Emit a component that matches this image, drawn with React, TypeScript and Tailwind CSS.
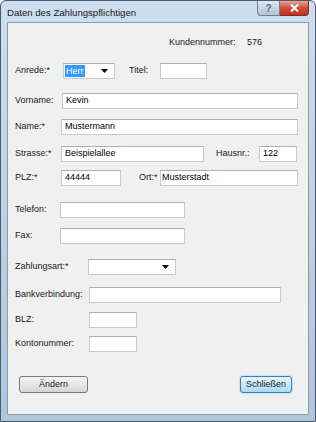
import React from "react";

const font = { fontFamily: '"Liberation Sans", Arial, sans-serif' };

const Box = ({ w, value, className = "" }: { w: string; value?: string; className?: string }) => (
  <div
    className={`h-[16px] ${w} bg-white border border-[#c5cbd2] border-t-[#a9b0b8] flex items-center pl-[3px] text-[9px] text-black ${className}`}
  >
    {value}
  </div>
);

const Label = ({ text, w }: { text: string; w: string }) => (
  <div className={`${w} shrink-0 text-[9px] text-[#202020]`}>{text}</div>
);

const Arrow = () => (
  <svg width="7" height="4" viewBox="0 0 7 4" className="shrink-0">
    <path d="M0 0h7L3.5 4z" fill="#000" />
  </svg>
);

export default function App() {
  return (
    <div style={font} className="w-[316px] h-[422px] overflow-hidden">
      {/* Fensterrahmen */}
      <div className="w-full h-full flex flex-col rounded-t-[6px] border border-[#4a5a6a] bg-gradient-to-b from-[#cddfee] via-[#bdd3e5] to-[#adc6db]">
        {/* Titelleiste */}
        <div className="h-[21px] flex items-start shrink-0">
          <div className="pl-[6px] pt-[5px] text-[9.6px] text-[#1a1a1a]">Daten des Zahlungspflichtigen</div>
          <div className="ml-auto mr-[6px] flex">
            <div className="w-[23px] h-[15px] rounded-bl-[4px] border border-[#6f7f90] border-t-0 bg-gradient-to-b from-[#dfe8f1] to-[#b3c3d3] flex items-center justify-center text-[10px] font-bold text-[#5a6a7a]">
              ?
            </div>
            <div className="w-[29px] h-[15px] rounded-br-[4px] border border-[#7a2a2a] border-t-0 border-l-0 bg-gradient-to-b from-[#e8a493] via-[#cf4b3a] to-[#c1301e] flex items-center justify-center">
              <svg width="9" height="8" viewBox="0 0 9 8">
                <path d="M1 0.5l7 7M8 0.5l-7 7" stroke="#fff" strokeWidth="2" />
              </svg>
            </div>
          </div>
        </div>

        {/* Client-Bereich */}
        <div className="flex-1 mx-[6px] mb-[6px] border border-[#8a9bad] bg-[#f0f0f0] flex flex-col px-[7px]">
          <div className="mt-[12px] h-[16px] flex items-center text-[9px] text-[#202020]">
            <div className="ml-[154px] w-[78px]">Kundennummer:</div>
            <div>576</div>
          </div>

          <div className="mt-[12px] h-[16px] flex items-center">
            <Label text="Anrede:*" w="w-[48px]" />
            <div className="w-[52px] h-[16px] bg-white border border-[#c5cbd2] border-t-[#a9b0b8] flex items-center pl-[1px] pr-[6px]">
              <span className="bg-[#3399ff] text-white text-[9px] px-[1px] leading-[12px]">Herr</span>
              <div className="ml-auto">
                <Arrow />
              </div>
            </div>
            <div className="ml-[14px] w-[31px] text-[9px] text-[#202020]">Titel:</div>
            <Box w="w-[47px]" />
          </div>

          <div className="mt-[14px] h-[16px] flex items-center">
            <Label text="Vorname:" w="w-[47px]" />
            <Box w="w-[236px]" value="Kevin" />
          </div>

          <div className="mt-[10px] h-[16px] flex items-center">
            <Label text="Name:*" w="w-[46px]" />
            <Box w="w-[237px]" value="Mustermann" />
          </div>

          <div className="mt-[11px] h-[16px] flex items-center">
            <Label text="Strasse:*" w="w-[46px]" />
            <Box w="w-[143px]" value="Beispielallee" />
            <div className="ml-[12px] w-[43px] text-[9px] text-[#202020]">Hausnr.:</div>
            <Box w="w-[38px]" value="122" />
          </div>

          <div className="mt-[8px] h-[16px] flex items-center">
            <Label text="PLZ:*" w="w-[46px]" />
            <Box w="w-[60px]" value="44444" />
            <div className="ml-[18px] w-[21px] text-[9px] text-[#202020]">Ort:*</div>
            <Box w="w-[138px]" value="Musterstadt" className="!pl-[1px]" />
          </div>

          <div className="mt-[16px] h-[16px] flex items-center">
            <Label text="Telefon:" w="w-[45px]" />
            <Box w="w-[125px]" />
          </div>

          <div className="mt-[10px] h-[16px] flex items-center">
            <Label text="Fax:" w="w-[45px]" />
            <Box w="w-[125px]" />
          </div>

          <div className="mt-[15px] h-[16px] flex items-center">
            <Label text="Zahlungsart:*" w="w-[73px]" />
            <div className="w-[88px] h-[16px] bg-white border border-[#c5cbd2] border-t-[#a9b0b8] flex items-center justify-end pr-[6px]">
              <Arrow />
            </div>
          </div>

          <div className="mt-[12px] h-[16px] flex items-center">
            <Label text="Bankverbindung:" w="w-[74px]" />
            <Box w="w-[192px]" />
          </div>

          <div className="mt-[9px] h-[16px] flex items-center">
            <Label text="BLZ:" w="w-[74px]" />
            <Box w="w-[48px]" />
          </div>

          <div className="mt-[8px] h-[16px] flex items-center">
            <Label text="Kontonummer:" w="w-[74px]" />
            <Box w="w-[48px]" />
          </div>

          <div className="mt-[24px] flex items-center px-[4px]">
            <button className="w-[69px] h-[17px] rounded-[3px] border border-[#7b7b7b] bg-gradient-to-b from-[#f3f3f3] via-[#e8e8e8] to-[#d5d5d5] text-[9px] text-[#202020]">
              Ändern
            </button>
            <button className="ml-auto mr-[5px] w-[52px] h-[17px] rounded-[3px] border border-[#3c7fb1] bg-gradient-to-b from-[#e8f6fd] via-[#c8e9fa] to-[#a7d9f5] text-[9px] text-[#202020] shadow-[0_0_2px_#68c0ee]">
              Schließen
            </button>
          </div>
        </div>
      </div>
    </div>
  );
}
